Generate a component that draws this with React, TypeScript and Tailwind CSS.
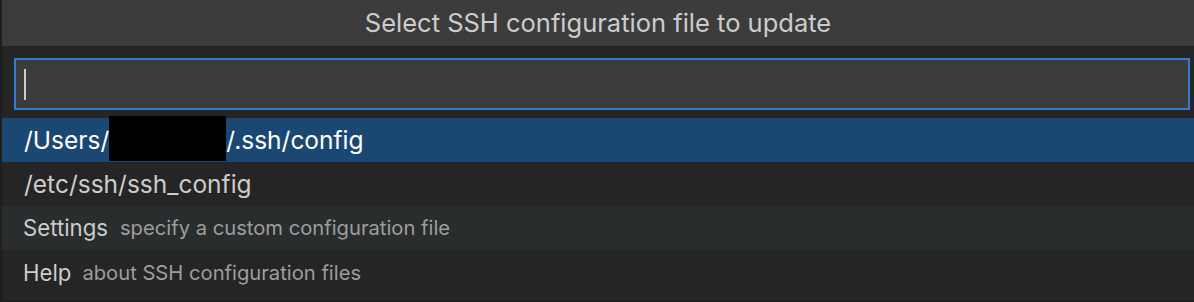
import React from 'react';

const items = [
  { label: '/Users/', rest: '.ssh/config', redacted: true },
  { label: '/etc/ssh/ssh_config' },
];

const actions = [
  { label: 'Settings', detail: 'specify a custom configuration file' },
  { label: 'Help', detail: 'about SSH configuration files' },
];

export default function App() {
  return (
    <div
      className="w-[1194px] h-[302px] bg-[#1e1e1e] pl-[2px] pb-[2px] overflow-hidden"
      style={{ fontFamily: 'Inter, "Liberation Sans", sans-serif' }}
    >
      <div className="h-[300px] bg-[#252526] flex flex-col">
        {/* Title */}
        <div className="h-[46px] bg-[#3c3c3c] flex items-center justify-center text-[25.5px] text-[#cccccc]">
          Select SSH configuration file to update
        </div>

        {/* Input */}
        <div className="pt-[12px] pl-[12px] pr-[4px] pb-[8px]">
          <div className="h-[52px] bg-[#3c3c3c] border-2 border-[#2f7bd2] flex items-center pl-[8px]">
            <div className="w-[2px] h-[31px] bg-[#cccccc]" />
          </div>
        </div>

        {/* Items */}
        <div className="flex flex-col">
          {items.map((it, i) => (
            <div
              key={i}
              className={`h-[44px] flex items-center pl-[22px] text-[24.5px] ${
                i === 0 ? 'bg-[#1a4872] text-white' : 'text-[#cccccc]'
              }`}
            >
              <span>{it.label}</span>
              {it.redacted && (
                <>
                  <span className="w-[117px] h-[45px] bg-black self-start -mt-[2px]" />
                  <span>/{it.rest}</span>
                </>
              )}
            </div>
          ))}
          {actions.map((a, i) => (
            <div
              key={a.label}
              className={`flex items-center pl-[21px] ${
                i === 0 ? 'h-[44px] gap-[12px] bg-[#2a2d2e]' : 'h-[50px] pb-[4px] gap-[11px]'
              }`}
            >
              <span className="text-[22.2px] text-[#cccccc]">{a.label}</span>
              <span className="text-[20.2px] text-[#9d9d9d]">{a.detail}</span>
            </div>
          ))}
        </div>
      </div>
    </div>
  );
}
